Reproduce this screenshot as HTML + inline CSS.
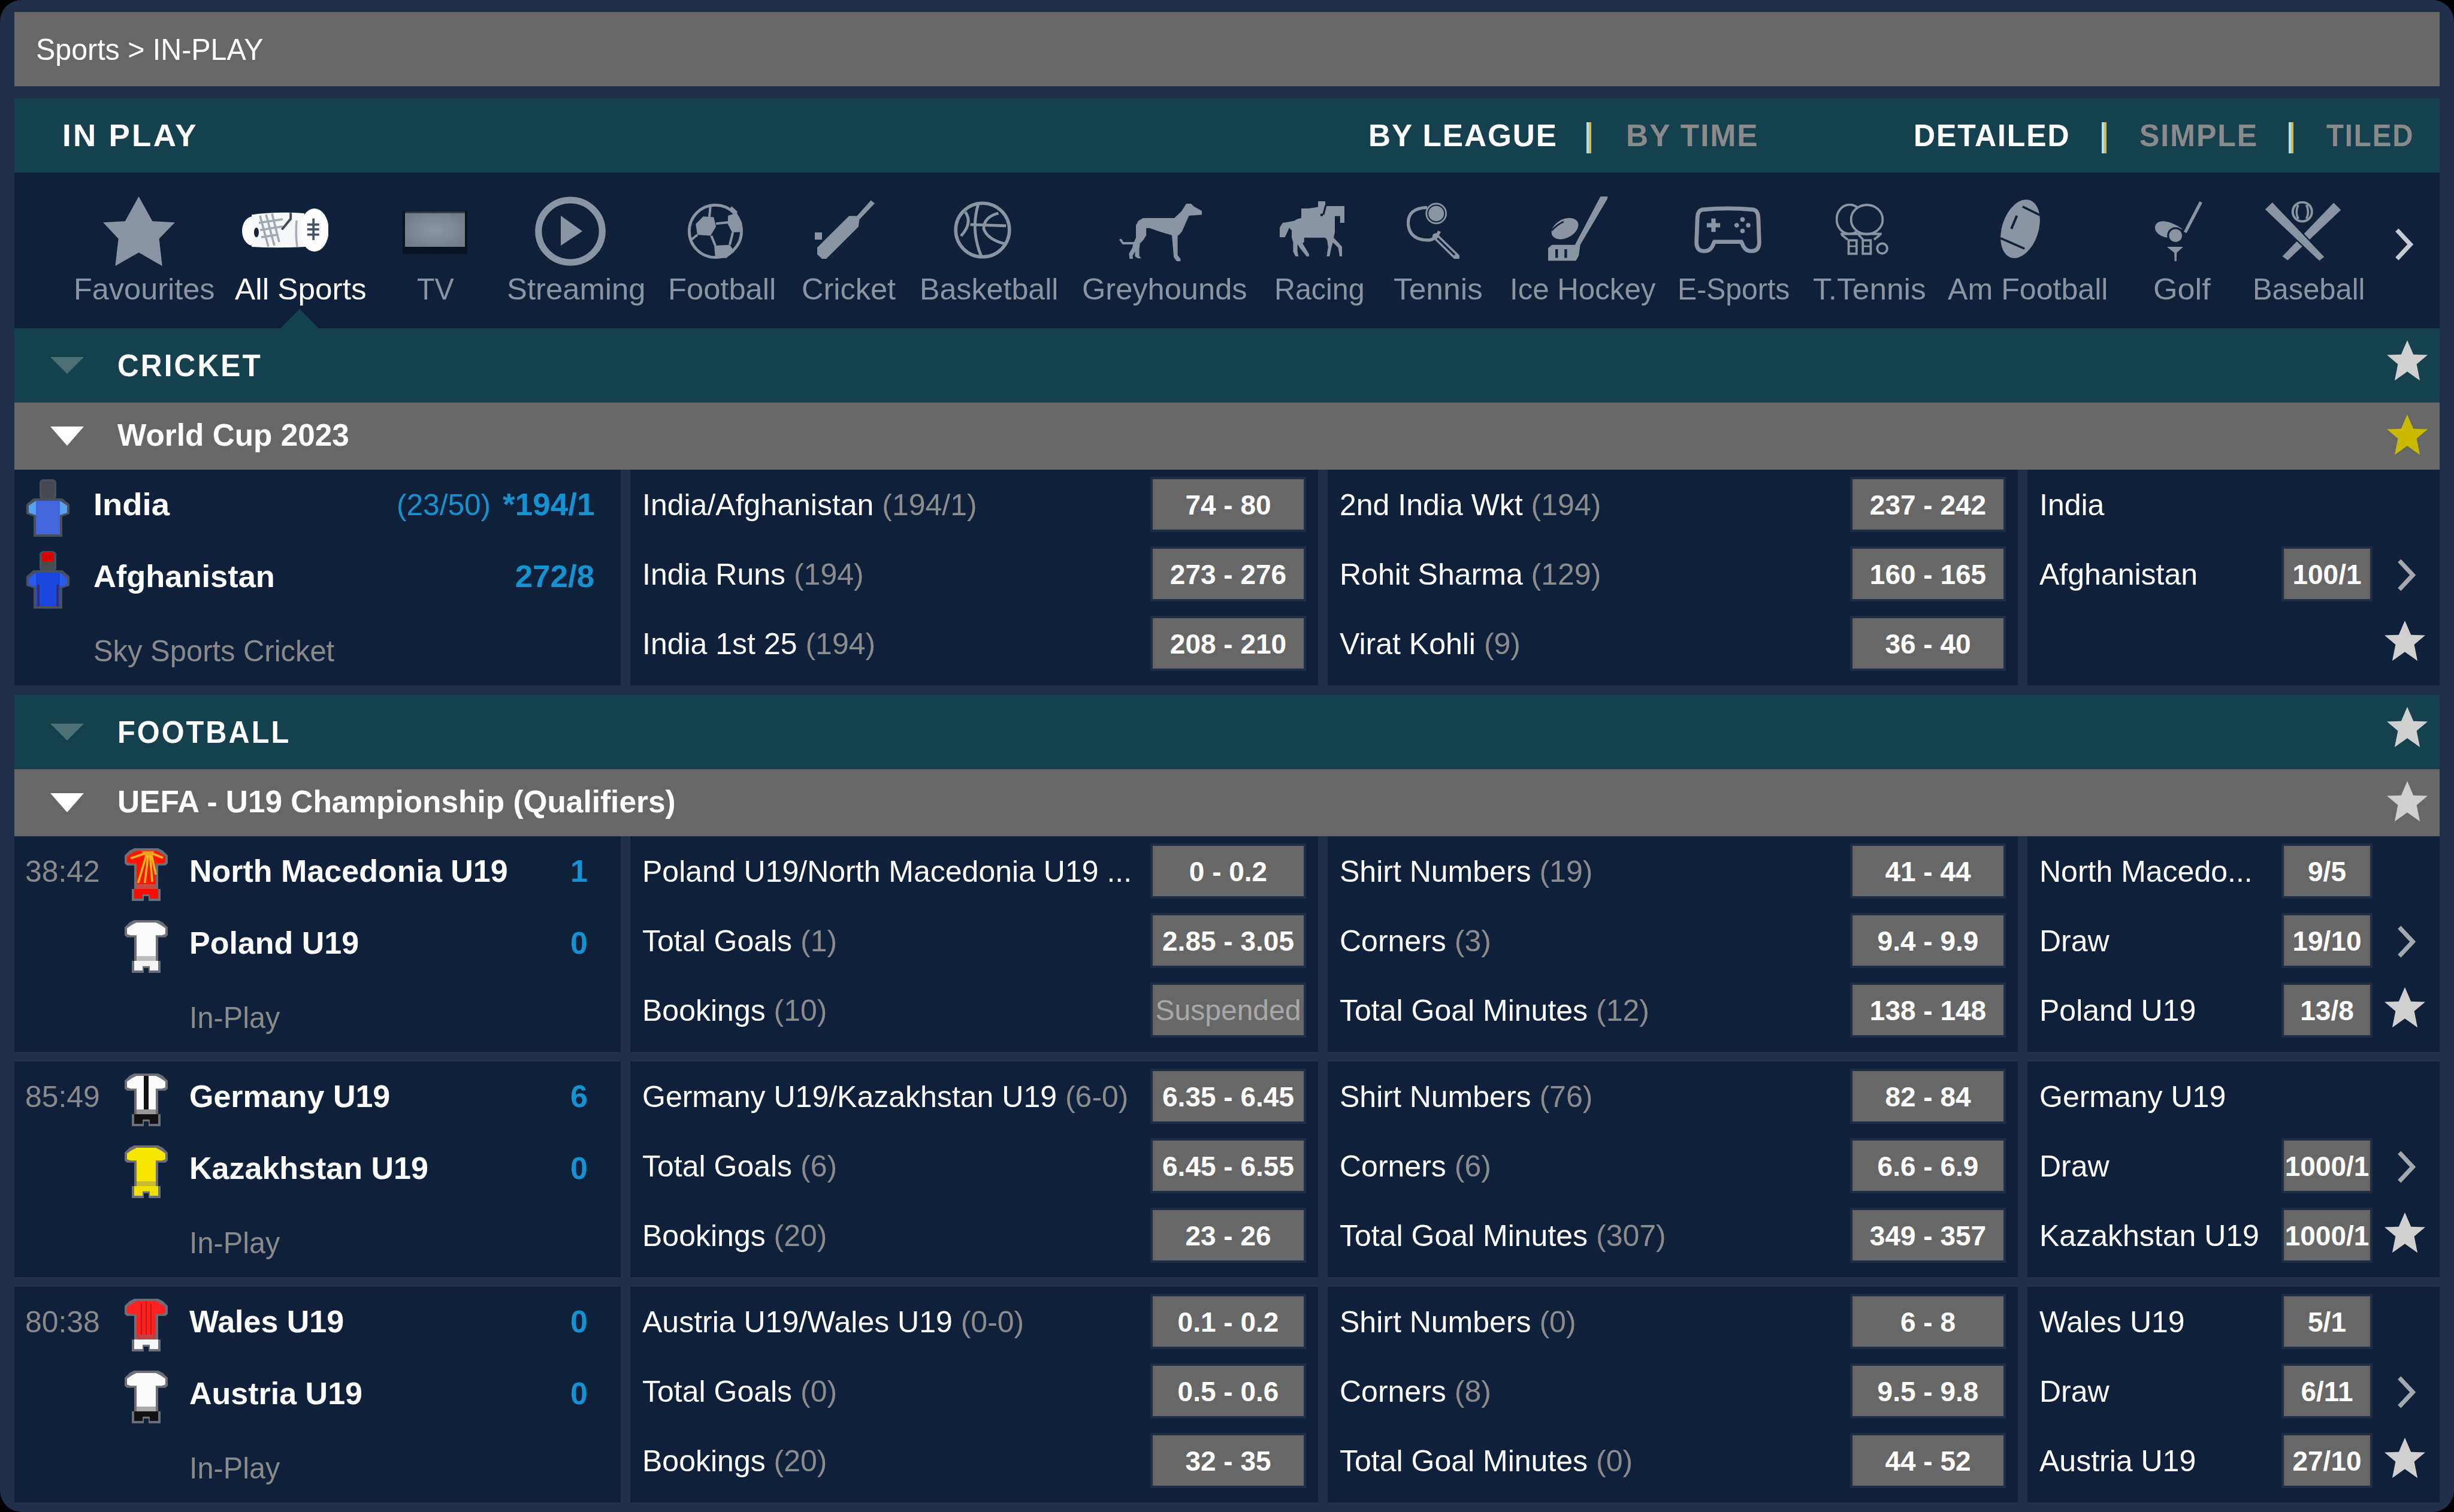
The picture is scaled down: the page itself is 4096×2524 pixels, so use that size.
<!DOCTYPE html>
<html><head><meta charset="utf-8"><style>
html,body{margin:0;padding:0;background:#000;}
body{width:4096px;height:2524px;overflow:hidden;}
#w{position:relative;width:1024px;height:631px;zoom:4;background:#21304a;border-radius:9px;overflow:hidden;font-family:"Liberation Sans", sans-serif;}
.t{position:absolute;white-space:pre;}
.r{position:absolute;display:block;}
</style></head><body><div id="w">
<div class="r" style="left:6px;top:5px;width:1012px;height:31px;background:#676767;"></div>
<div class="t" style="left:15px;top:14.42px;font-size:12.5px;line-height:12.5px;font-weight:400;color:#fff;letter-spacing:0px;transform:scaleX(0.9671);transform-origin:0 0;">Sports &gt; IN-PLAY</div>
<div class="r" style="left:6px;top:41px;width:1012px;height:31px;background:#15404d;"></div>
<div class="t" style="left:26px;top:50.00px;font-size:13px;line-height:13px;font-weight:700;color:#fff;letter-spacing:0.8px;transform:scaleX(1.0189);transform-origin:0 0;">IN PLAY</div>
<div class="t" style="left:571px;top:50.00px;font-size:13px;line-height:13px;font-weight:700;color:#fff;letter-spacing:0.5px;transform:scaleX(0.9860);transform-origin:0 0;">BY LEAGUE</div>
<div class="t" style="left:678.5px;top:50.00px;font-size:13px;line-height:13px;font-weight:700;color:#8a8a8a;letter-spacing:0.5px;transform:scaleX(0.9893);transform-origin:0 0;">BY TIME</div>
<div class="t" style="left:798.5px;top:50.00px;font-size:13px;line-height:13px;font-weight:700;color:#fff;letter-spacing:0.5px;transform:scaleX(0.9606);transform-origin:0 0;">DETAILED</div>
<div class="t" style="left:892.8px;top:50.00px;font-size:13px;line-height:13px;font-weight:700;color:#8a8a8a;letter-spacing:0.5px;transform:scaleX(0.9643);transform-origin:0 0;">SIMPLE</div>
<div class="t" style="left:970.7px;top:50.00px;font-size:13px;line-height:13px;font-weight:700;color:#8a8a8a;letter-spacing:0.5px;transform:scaleX(0.9135);transform-origin:0 0;">TILED</div>
<div class="r" style="left:662px;top:51px;width:1px;height:13px;background:#a8e0f8;"></div>
<div class="r" style="left:663px;top:51px;width:1px;height:13px;background:#d8b850;"></div>
<div class="r" style="left:877px;top:51px;width:1px;height:13px;background:#a8e0f8;"></div>
<div class="r" style="left:878px;top:51px;width:1px;height:13px;background:#d8b850;"></div>
<div class="r" style="left:955px;top:51px;width:1px;height:13px;background:#a8e0f8;"></div>
<div class="r" style="left:956px;top:51px;width:1px;height:13px;background:#d8b850;"></div>
<div class="r" style="left:6px;top:72px;width:1012px;height:65px;background:#0f203a;"></div>
<div class="t" style="left:30.7px;top:114.42px;font-size:12.5px;line-height:12.5px;font-weight:400;color:#8a94a3;letter-spacing:0px;transform:scaleX(1.0090);transform-origin:0 0;">Favourites</div>
<div class="t" style="left:98px;top:114.42px;font-size:12.5px;line-height:12.5px;font-weight:400;color:#fff;letter-spacing:0px;transform:scaleX(1.0263);transform-origin:0 0;">All Sports</div>
<div class="t" style="left:174px;top:114.42px;font-size:12.5px;line-height:12.5px;font-weight:400;color:#8a94a3;letter-spacing:0px;transform:scaleX(0.9668);transform-origin:0 0;">TV</div>
<div class="t" style="left:211.5px;top:114.42px;font-size:12.5px;line-height:12.5px;font-weight:400;color:#8a94a3;letter-spacing:0px;transform:scaleX(1.0161);transform-origin:0 0;">Streaming</div>
<div class="t" style="left:278.8px;top:114.42px;font-size:12.5px;line-height:12.5px;font-weight:400;color:#8a94a3;letter-spacing:0px;transform:scaleX(1.0138);transform-origin:0 0;">Football</div>
<div class="t" style="left:334.4px;top:114.42px;font-size:12.5px;line-height:12.5px;font-weight:400;color:#8a94a3;letter-spacing:0px;transform:scaleX(1.0100);transform-origin:0 0;">Cricket</div>
<div class="t" style="left:383.8px;top:114.42px;font-size:12.5px;line-height:12.5px;font-weight:400;color:#8a94a3;letter-spacing:0px;transform:scaleX(1.0035);transform-origin:0 0;">Basketball</div>
<div class="t" style="left:451.6px;top:114.42px;font-size:12.5px;line-height:12.5px;font-weight:400;color:#8a94a3;letter-spacing:0px;transform:scaleX(1.0116);transform-origin:0 0;">Greyhounds</div>
<div class="t" style="left:531.8px;top:114.42px;font-size:12.5px;line-height:12.5px;font-weight:400;color:#8a94a3;letter-spacing:0px;transform:scaleX(0.9675);transform-origin:0 0;">Racing</div>
<div class="t" style="left:581.4px;top:114.42px;font-size:12.5px;line-height:12.5px;font-weight:400;color:#8a94a3;letter-spacing:0px;transform:scaleX(1.0296);transform-origin:0 0;">Tennis</div>
<div class="t" style="left:630px;top:114.42px;font-size:12.5px;line-height:12.5px;font-weight:400;color:#8a94a3;letter-spacing:0px;transform:scaleX(0.9843);transform-origin:0 0;">Ice Hockey</div>
<div class="t" style="left:700px;top:114.42px;font-size:12.5px;line-height:12.5px;font-weight:400;color:#8a94a3;letter-spacing:0px;transform:scaleX(0.9633);transform-origin:0 0;">E-Sports</div>
<div class="t" style="left:756.4px;top:114.42px;font-size:12.5px;line-height:12.5px;font-weight:400;color:#8a94a3;letter-spacing:0px;transform:scaleX(1.0292);transform-origin:0 0;">T.Tennis</div>
<div class="t" style="left:812.8px;top:114.42px;font-size:12.5px;line-height:12.5px;font-weight:400;color:#8a94a3;letter-spacing:0px;transform:scaleX(1.0027);transform-origin:0 0;">Am Football</div>
<div class="t" style="left:898.4px;top:114.42px;font-size:12.5px;line-height:12.5px;font-weight:400;color:#8a94a3;letter-spacing:0px;transform:scaleX(1.0430);transform-origin:0 0;">Golf</div>
<div class="t" style="left:940px;top:114.42px;font-size:12.5px;line-height:12.5px;font-weight:400;color:#8a94a3;letter-spacing:0px;transform:scaleX(0.9772);transform-origin:0 0;">Baseball</div>
<svg class="r" style="left:43px;top:82px;width:30px;height:29px;" viewBox="0 0 30 29" preserveAspectRatio="none"><path d="M14.9,0 L20.6,10.3 L30,10.8 L23.4,17.6 L24.7,29 L14.9,23.4 L5.1,29 L6.4,17.6 L0,10.8 L9.2,10.3 Z" fill="#8a94a3"/></svg>
<svg class="r" style="left:101px;top:87px;width:36px;height:18px;" viewBox="0 0 36 18" preserveAspectRatio="none"><ellipse cx="4.6" cy="9.4" rx="4.6" ry="6.1" fill="#fbfbfb"/><path d="M4,2.6 Q14,1.2 26,2 L26.5,16 Q14,16.6 4,16 Z" fill="#f6f7f8"/><path d="M7.5,3 L11,16 M10,2.5 L13.5,15.5 M12.5,2.2 L15.5,14 M7,6 L17,4.5 M7.5,9 L17,7.5 M8,12 L14.5,11" stroke="#a0a8b4" stroke-width="0.9" fill="none"/><ellipse cx="6" cy="10" rx="1" ry="2" fill="#1a2538"/><path d="M20.3,1.8 V4.3 L16.6,8.8" stroke="#3e4a5c" stroke-width="1" fill="none"/><path d="M22.8,5 Q22.2,10 23,16" stroke="#a8aeb8" stroke-width="0.9" fill="none"/><ellipse cx="30.2" cy="9" rx="6" ry="9" fill="#fdfdfd"/><path d="M29.8,4.2 V13.2 M27.2,6.7 H32.2 M27.2,8.7 H32.2 M27.2,10.9 H32.2" stroke="#46526a" stroke-width="0.95"/></svg>
<svg class="r" style="left:168px;top:88px;width:27px;height:18px;" viewBox="0 0 27 18" preserveAspectRatio="none"><defs><radialGradient id="tvg" cx="50%" cy="50%" r="60%"><stop offset="0" stop-color="#8d97a4"/><stop offset="1" stop-color="#737c88"/></radialGradient></defs><rect x="0" y="0" width="27" height="18" fill="#0a1322"/><rect x="1" y="0.2" width="25" height="1" fill="#333a44"/><rect x="1" y="1" width="25" height="14" fill="url(#tvg)"/></svg>
<svg class="r" style="left:223px;top:82px;width:30px;height:29px;" viewBox="0 0 30 29" preserveAspectRatio="none"><ellipse cx="15" cy="14.5" rx="13.3" ry="13" fill="none" stroke="#8a94a3" stroke-width="2.8"/><path d="M11,8 L20,14.5 L11,20.5 Z" fill="#8a94a3"/></svg>
<svg class="r" style="left:287px;top:85px;width:23px;height:23px;" viewBox="0 0 23 23" preserveAspectRatio="none"><circle cx="11.5" cy="11.5" r="10.9" fill="none" stroke="#8a94a3" stroke-width="1.2"/><path d="M6.5,5.3 L10.8,5.6 L11.8,9.5 L9.5,13.4 L4,13 L3.3,8.5 Z" fill="#8a94a3"/><path d="M16.8,5 L20.5,3.8 L22.6,8 L22.3,11.8 L18.5,12 L16.7,8.5 Z" fill="#8a94a3"/><path d="M11,17.5 L17.5,17.2 L19.5,20 L16,22.7 L11.5,22.7 Z" fill="#8a94a3"/><path d="M9,5.5 L9.5,0.5 M11.8,8.3 L16.8,7.8 M9.8,13.4 L11.5,17.5 M18.8,12 L17.5,17.2 M4,13 L1.5,15 M20.5,3.8 L18,1.5" stroke="#8a94a3" stroke-width="1" fill="none"/></svg>
<svg class="r" style="left:340px;top:83px;width:25px;height:25px;" viewBox="0 0 25 25" preserveAspectRatio="none"><rect x="0" y="14" width="3" height="3" fill="#8a94a3"/><path d="M23.4,0.6 L25,1.9 L18.6,8.6 L18.2,11.6 L6.1,23.7 L4.8,25 L3,25 L1,23.1 L1,20.3 L13.2,8.2 L14.3,7.1 L17.6,7.1 Z" fill="#8a94a3"/></svg>
<svg class="r" style="left:398px;top:84px;width:24px;height:24px;" viewBox="0 0 24 24" preserveAspectRatio="none"><circle cx="12" cy="12" r="11.2" fill="none" stroke="#8a94a3" stroke-width="1.4"/><path d="M10.2,1.2 Q7.8,9.5 9.6,17 Q10.3,20.5 11.6,23 M4.8,4.5 Q8,9 3,14.5 M18.6,5 Q12.5,6.5 12.5,11.5 Q14,16 21.5,17.8 M6.9,9.7 L21.8,10.2" fill="none" stroke="#8a94a3" stroke-width="1.2"/></svg>
<svg class="r" style="left:467px;top:85px;width:35px;height:24px;" viewBox="0 0 35 24" preserveAspectRatio="none"><path d="M28,0 H30 L31,1 L32,1.6 L34.5,3 V4.6 L29.2,5 L28.4,6.6 L27.2,9.4 L26.2,11.6 L25,13 L24.4,13.4 V21.5 L25.6,23 V24 H24 L22.8,22.4 L22,13.2 L17,11.7 L12.7,10.2 H11.3 V13.2 L10.2,15 L8.7,16.6 L8.4,19 V21.8 L9.2,22.8 H7.8 L6.6,22 V20 L5.6,21.8 L5.8,23 H4.3 L4.1,20.8 L5.5,18.4 L5.8,17 H1.4 L0,15 L0.9,14.6 L1.8,16 H6.2 L7,14.2 V9 L8,7.2 L10,6 H23 L26,3.2 Z" fill="#8a94a3"/></svg>
<svg class="r" style="left:533px;top:84px;width:28px;height:24px;" viewBox="0 0 28 24" preserveAspectRatio="none"><path d="M17,0 H20 V2 L21,2 H28 V9 H26.2 V6.2 H24 V13 L23.5,15.2 L25.8,17.6 L27,19 V23 H26 L25.4,19.4 L23.2,17.2 L22.6,19.2 L21.8,23 H20.6 L21.2,19 L20.8,16.2 L20,15.2 H11.2 V16.8 L10.6,17.6 L13.2,22 V23 H12.2 L9.5,19.6 L8.4,17.8 V21 L8.8,23 H7.6 L6.6,21 V17.2 L6,15 V12.2 L5,11 L3.2,15 H1 V11 L2.2,9 L7,8.2 L8.4,7.4 L10,7 V3 H13 L17,2.4 Z" fill="#8a94a3"/><path d="M20.2,1.8 L19.2,5.6" stroke="#0f203a" stroke-width="0.8"/><rect x="18" y="5.2" width="1" height="1" fill="#0f203a"/></svg>
<svg class="r" style="left:587px;top:84px;width:22px;height:24px;" viewBox="0 0 22 24" preserveAspectRatio="none"><path d="M8.5,2.6 Q0.3,2.8 0.6,9.6 Q1.3,16.3 9.3,16.2 Q12.3,15.8 13.6,12.5" fill="none" stroke="#8a94a3" stroke-width="1.3"/><circle cx="12.3" cy="5.1" r="3.6" fill="#8a94a3" stroke="#0f203a" stroke-width="0.7"/><circle cx="12.3" cy="5.1" r="4.1" fill="none" stroke="#8a94a3" stroke-width="0.7"/><path d="M12,14.6 L20.8,23.2" stroke="#8a94a3" stroke-width="2.6" stroke-linecap="round"/><path d="M12.8,15.4 L20,22.4" stroke="#0f203a" stroke-width="0.8"/></svg>
<svg class="r" style="left:646px;top:82px;width:25px;height:27px;" viewBox="0 0 25 27" preserveAspectRatio="none"><path d="M21.9,0 L24.9,0 L24.6,1.2 L13.4,20.2 L12.8,24.6 L11.6,26.8 L0,26.8 L0,21.5 L1.6,20.2 L11.2,20.2 L21.3,1 Z" fill="#8a94a3"/><rect x="3" y="22" width="1.1" height="3.6" fill="#0f203a"/><rect x="6.8" y="22" width="1.1" height="3.6" fill="#0f203a"/><ellipse cx="7" cy="13.4" rx="6" ry="3.9" transform="rotate(-28 7 13.4)" fill="#8a94a3"/><path d="M1.5,14.2 Q4,11.5 6.5,10.5" stroke="#0f203a" stroke-width="0.7" fill="none"/></svg>
<svg class="r" style="left:707px;top:86px;width:28px;height:20px;" viewBox="0 0 28 20" preserveAspectRatio="none"><path d="M3.2,1.5 Q14,0.4 24.8,1.5 Q26.6,2 26.7,4.8 L27.1,15 Q27.1,18.8 23.8,18.8 Q21.5,18.8 20.5,16.8 L19.6,14.9 L8.4,14.9 L7.5,16.8 Q6.5,18.8 4.2,18.8 Q0.9,18.8 0.9,15 L1.3,4.8 Q1.4,2 3.2,1.5 Z" fill="none" stroke="#8a94a3" stroke-width="1.7"/><path d="M8,5.2 V10.8 M5.2,8 H10.8" stroke="#8a94a3" stroke-width="1.8"/><circle cx="20.1" cy="5.6" r="0.95" fill="#8a94a3"/><circle cx="20.1" cy="10.4" r="0.95" fill="#8a94a3"/><circle cx="17.7" cy="8" r="0.95" fill="#8a94a3"/><circle cx="22.5" cy="8" r="0.95" fill="#8a94a3"/></svg>
<svg class="r" style="left:766px;top:85px;width:22px;height:22px;" viewBox="0 0 22 22" preserveAspectRatio="none"><ellipse cx="5.8" cy="6.5" rx="5.4" ry="6.1" fill="none" stroke="#8a94a3" stroke-width="0.95"/><ellipse cx="13" cy="6.6" rx="6.6" ry="6.1" fill="#0f203a" stroke="#8a94a3" stroke-width="0.95"/><path d="M2,12.6 H19.2" stroke="#8a94a3" stroke-width="1"/><path d="M2.5,13 L5,15 M9.5,13 L11.5,15 M18.5,13 L16,15" stroke="#8a94a3" stroke-width="0.9"/><rect x="5.4" y="15.3" width="3.3" height="5.6" fill="none" stroke="#8a94a3" stroke-width="0.95"/><rect x="11.3" y="15.3" width="3.3" height="5.6" fill="none" stroke="#8a94a3" stroke-width="0.95"/><path d="M5.4,17.8 H8.7 M11.3,17.8 H14.6" stroke="#8a94a3" stroke-width="0.7"/><circle cx="19.4" cy="18.7" r="2.1" fill="none" stroke="#8a94a3" stroke-width="0.95"/></svg>
<svg class="r" style="left:834px;top:83px;width:18px;height:25px;" viewBox="0 0 18 25" preserveAspectRatio="none"><ellipse cx="9" cy="12.5" rx="7.6" ry="12.6" transform="rotate(18 9 12.5)" fill="#8a94a3"/><path d="M10,3.2 L17.2,6.8 M0.8,16.4 L10.8,20.8" stroke="#0f203a" stroke-width="0.9"/><path d="M7.6,7 L5.3,12.5" stroke="#0f203a" stroke-width="1"/></svg>
<svg class="r" style="left:899px;top:84px;width:20px;height:25px;" viewBox="0 0 20 25" preserveAspectRatio="none"><path d="M19.4,0.3 L12.8,13" stroke="#8a94a3" stroke-width="1.3"/><path d="M0.2,10.5 Q0.8,8.2 4,8.3 Q8,8.8 11.5,11.5 L9.5,14.5 Q6,16 3,14.5 Q0,13 0.2,10.5 Z" fill="#8a94a3"/><circle cx="8.8" cy="14.3" r="3.1" fill="#8a94a3" stroke="#0f203a" stroke-width="0.8"/><path d="M5.2,19 H12 L9.3,21.5 L9.2,25 L8.4,25 L8.3,21.5 Z" fill="#8a94a3"/></svg>
<svg class="r" style="left:945px;top:84px;width:32px;height:25px;" viewBox="0 0 32 25" preserveAspectRatio="none"><path d="M28.8,0.6 L31.8,3.6 L9.6,24.6 L7.4,23 Z" fill="#8a94a3"/><path d="M0.2,3.4 L3.2,0.5 L24.8,23.2 L22.8,24.8 Z" fill="#8a94a3" stroke="#0f203a" stroke-width="1.2" paint-order="stroke"/><circle cx="15.7" cy="4.4" r="4" fill="none" stroke="#8a94a3" stroke-width="1"/><path d="M14,1.5 Q12.6,4.4 14,7.3 M17.4,1.5 Q18.8,4.4 17.4,7.3" stroke="#8a94a3" stroke-width="0.9" fill="none"/></svg>
<svg class="r" style="left:999px;top:95px;width:8px;height:14px;" viewBox="0 0 8 14" preserveAspectRatio="none"><path d="M1.2 1 L6.8 7 L1.2 13" fill="none" stroke="#c8ccd0" stroke-width="1.8"/></svg>
<svg class="r" style="left:117px;top:129px;width:16px;height:8px;" viewBox="0 0 16 8" preserveAspectRatio="none"><path d="M0 8 L8 0 L16 8 Z" fill="#15404d"/></svg>
<div class="r" style="left:6px;top:137px;width:1012px;height:31px;background:#15404d;"></div>
<svg class="r" style="left:21px;top:149px;width:14px;height:7px;" viewBox="0 0 14 8" preserveAspectRatio="none"><path d="M0 0 L14 0 L7 8 Z" fill="#4d7077"/></svg>
<div class="t" style="left:49px;top:146.00px;font-size:13px;line-height:13px;font-weight:700;color:#fff;letter-spacing:0.8px;transform:scaleX(0.9535);transform-origin:0 0;">CRICKET</div>
<svg class="r" style="left:996px;top:142px;width:17px;height:17px;" viewBox="0 0 100 100" preserveAspectRatio="none"><path d="M50 0 L65 35 L100 36 L73 59 L81 99 L50 77 L19 99 L27 59 L0 36 L35 35 Z" fill="#d0d0d0"/></svg>
<div class="r" style="left:6px;top:168px;width:1012px;height:28px;background:#676767;"></div>
<svg class="r" style="left:21px;top:178px;width:14px;height:8px;" viewBox="0 0 14 8" preserveAspectRatio="none"><path d="M0 0 L14 0 L7 8 Z" fill="#fff"/></svg>
<div class="t" style="left:49px;top:175.00px;font-size:13px;line-height:13px;font-weight:700;color:#fff;letter-spacing:0px;transform:scaleX(0.9867);transform-origin:0 0;">World Cup 2023</div>
<svg class="r" style="left:996px;top:173px;width:17px;height:17px;" viewBox="0 0 100 100" preserveAspectRatio="none"><path d="M50 0 L65 35 L100 36 L73 59 L81 99 L50 77 L19 99 L27 59 L0 36 L35 35 Z" fill="#c9b900"/></svg>
<div class="r" style="left:6px;top:196px;width:253px;height:90px;background:#0f203a;"></div>
<div class="r" style="left:263px;top:196px;width:287px;height:90px;background:#0f203a;"></div>
<div class="r" style="left:554px;top:196px;width:288px;height:90px;background:#0f203a;"></div>
<div class="r" style="left:846px;top:196px;width:172px;height:90px;background:#0f203a;"></div>
<svg class="r" style="left:11px;top:200px;width:18px;height:24px;" viewBox="0 0 18 24" preserveAspectRatio="none"><rect x="5.5" y="0" width="7" height="8.5" rx="1.5" fill="#4a4f5c"/><path d="M3,8 H15 L18,10.5 V14.5 L15,15.5 V24 H3 V15.5 L0,14.5 V10.5 Z" fill="#4a4f5c"/><rect x="6.5" y="1" width="5" height="7" rx="1" fill="#46474f"/><path d="M4,9 H14 V23 H4 Z" fill="#4466dd"/><path d="M1,11 L4,9 V15 L1,14 Z M17,11 L14,9 V15 L17,14 Z" fill="#58a0f2"/></svg>
<svg class="r" style="left:11px;top:230px;width:18px;height:24px;" viewBox="0 0 18 24" preserveAspectRatio="none"><rect x="5.5" y="0" width="7" height="8.5" rx="1.5" fill="#4a4f5c"/><path d="M3,8 H15 L18,10.5 V14.5 L15,15.5 V24 H3 V15.5 L0,14.5 V10.5 Z" fill="#4a4f5c"/><rect x="6.5" y="0.5" width="5" height="3.8" rx="1" fill="#e00000"/><rect x="6.5" y="4.3" width="5" height="3.7" fill="#4a4b52"/><path d="M4,9 H14 V23 H4 Z" fill="#1a46dd"/><path d="M1,11 L4,9 V15 L1,14 Z M17,11 L14,9 V15 L17,14 Z" fill="#2a5ae8"/><path d="M5,14 V23 M13,14 V23" stroke="#3a2a66" stroke-width="0.9"/></svg>
<div class="t" style="left:39px;top:204.00px;font-size:13px;line-height:13px;font-weight:700;color:#fff;letter-spacing:0px;transform:scaleX(1.0467);transform-origin:0 0;">India</div>
<div class="t" style="left:165.6px;top:204.42px;font-size:12.5px;line-height:12.5px;font-weight:400;color:#1592d2;letter-spacing:0px;transform:scaleX(0.9914);transform-origin:0 0;">(23/50)</div>
<div class="t" style="right:776px;top:204.00px;font-size:13px;line-height:13px;font-weight:700;color:#1592d2;letter-spacing:0px;transform:scaleX(1.0195);transform-origin:100% 0;">*194/1</div>
<div class="t" style="left:39px;top:234.00px;font-size:13px;line-height:13px;font-weight:700;color:#fff;letter-spacing:0px;transform:scaleX(1.0080);transform-origin:0 0;">Afghanistan</div>
<div class="t" style="right:776px;top:234.00px;font-size:13px;line-height:13px;font-weight:700;color:#1592d2;letter-spacing:0px;transform:scaleX(1.0182);transform-origin:100% 0;">272/8</div>
<div class="t" style="left:39px;top:265.42px;font-size:12.5px;line-height:12.5px;font-weight:400;color:#8a8a8a;letter-spacing:0px;transform:scaleX(0.9781);transform-origin:0 0;">Sky Sports Cricket</div>
<div class="t" style="left:268px;top:204.42px;font-size:12.5px;line-height:12.5px;font-weight:400;color:#fff;letter-spacing:0px;">India/Afghanistan<span style="color:#8c8c8c"> (194/1)</span></div>
<div class="r" style="left:480px;top:199px;width:65px;height:23px;background:#676767;border:1px solid #1f2e45;box-sizing:border-box;"></div>
<div class="t" style="left:362.5px;width:300px;text-align:center;top:204.97px;font-size:11.5px;line-height:11.5px;font-weight:700;color:#fff;letter-spacing:0px;">74 - 80</div>
<div class="t" style="left:268px;top:233.42px;font-size:12.5px;line-height:12.5px;font-weight:400;color:#fff;letter-spacing:0px;">India Runs<span style="color:#8c8c8c"> (194)</span></div>
<div class="r" style="left:480px;top:228px;width:65px;height:23px;background:#676767;border:1px solid #1f2e45;box-sizing:border-box;"></div>
<div class="t" style="left:362.5px;width:300px;text-align:center;top:233.97px;font-size:11.5px;line-height:11.5px;font-weight:700;color:#fff;letter-spacing:0px;">273 - 276</div>
<div class="t" style="left:268px;top:262.42px;font-size:12.5px;line-height:12.5px;font-weight:400;color:#fff;letter-spacing:0px;">India 1st 25<span style="color:#8c8c8c"> (194)</span></div>
<div class="r" style="left:480px;top:257px;width:65px;height:23px;background:#676767;border:1px solid #1f2e45;box-sizing:border-box;"></div>
<div class="t" style="left:362.5px;width:300px;text-align:center;top:262.97px;font-size:11.5px;line-height:11.5px;font-weight:700;color:#fff;letter-spacing:0px;">208 - 210</div>
<div class="t" style="left:559px;top:204.42px;font-size:12.5px;line-height:12.5px;font-weight:400;color:#fff;letter-spacing:0px;">2nd India Wkt<span style="color:#8c8c8c"> (194)</span></div>
<div class="r" style="left:772px;top:199px;width:65px;height:23px;background:#676767;border:1px solid #1f2e45;box-sizing:border-box;"></div>
<div class="t" style="left:654.5px;width:300px;text-align:center;top:204.97px;font-size:11.5px;line-height:11.5px;font-weight:700;color:#fff;letter-spacing:0px;">237 - 242</div>
<div class="t" style="left:559px;top:233.42px;font-size:12.5px;line-height:12.5px;font-weight:400;color:#fff;letter-spacing:0px;">Rohit Sharma<span style="color:#8c8c8c"> (129)</span></div>
<div class="r" style="left:772px;top:228px;width:65px;height:23px;background:#676767;border:1px solid #1f2e45;box-sizing:border-box;"></div>
<div class="t" style="left:654.5px;width:300px;text-align:center;top:233.97px;font-size:11.5px;line-height:11.5px;font-weight:700;color:#fff;letter-spacing:0px;">160 - 165</div>
<div class="t" style="left:559px;top:262.42px;font-size:12.5px;line-height:12.5px;font-weight:400;color:#fff;letter-spacing:0px;">Virat Kohli<span style="color:#8c8c8c"> (9)</span></div>
<div class="r" style="left:772px;top:257px;width:65px;height:23px;background:#676767;border:1px solid #1f2e45;box-sizing:border-box;"></div>
<div class="t" style="left:654.5px;width:300px;text-align:center;top:262.97px;font-size:11.5px;line-height:11.5px;font-weight:700;color:#fff;letter-spacing:0px;">36 - 40</div>
<div class="t" style="left:851px;top:204.42px;font-size:12.5px;line-height:12.5px;font-weight:400;color:#fff;letter-spacing:0px;">India</div>
<div class="t" style="left:851px;top:233.42px;font-size:12.5px;line-height:12.5px;font-weight:400;color:#fff;letter-spacing:0px;">Afghanistan</div>
<div class="r" style="left:952px;top:228px;width:38px;height:23px;background:#676767;border:1px solid #1f2e45;box-sizing:border-box;"></div>
<div class="t" style="left:821.0px;width:300px;text-align:center;top:233.97px;font-size:11.5px;line-height:11.5px;font-weight:700;color:#fff;letter-spacing:0px;">100/1</div>
<div class="t" style="left:851px;top:262.42px;font-size:12.5px;line-height:12.5px;font-weight:400;color:#fff;letter-spacing:0px;"></div>
<svg class="r" style="left:1000px;top:233px;width:8px;height:14px;" viewBox="0 0 8 14" preserveAspectRatio="none"><path d="M1.2 1 L6.8 7 L1.2 13" fill="none" stroke="#a4a8ac" stroke-width="1.8"/></svg>
<svg class="r" style="left:995px;top:259px;width:17px;height:17px;" viewBox="0 0 100 100" preserveAspectRatio="none"><path d="M50 0 L65 35 L100 36 L73 59 L81 99 L50 77 L19 99 L27 59 L0 36 L35 35 Z" fill="#d0d0d0"/></svg>
<div class="r" style="left:6px;top:286px;width:1012px;height:4px;background:#21304a;"></div>
<div class="r" style="left:6px;top:290px;width:1012px;height:31px;background:#15404d;"></div>
<svg class="r" style="left:21px;top:302px;width:14px;height:7px;" viewBox="0 0 14 8" preserveAspectRatio="none"><path d="M0 0 L14 0 L7 8 Z" fill="#4d7077"/></svg>
<div class="t" style="left:49px;top:299.00px;font-size:13px;line-height:13px;font-weight:700;color:#fff;letter-spacing:0.8px;transform:scaleX(0.9370);transform-origin:0 0;">FOOTBALL</div>
<svg class="r" style="left:996px;top:295px;width:17px;height:17px;" viewBox="0 0 100 100" preserveAspectRatio="none"><path d="M50 0 L65 35 L100 36 L73 59 L81 99 L50 77 L19 99 L27 59 L0 36 L35 35 Z" fill="#d0d0d0"/></svg>
<div class="r" style="left:6px;top:321px;width:1012px;height:28px;background:#676767;"></div>
<svg class="r" style="left:21px;top:331px;width:14px;height:8px;" viewBox="0 0 14 8" preserveAspectRatio="none"><path d="M0 0 L14 0 L7 8 Z" fill="#fff"/></svg>
<div class="t" style="left:49px;top:328.00px;font-size:13px;line-height:13px;font-weight:700;color:#fff;letter-spacing:0px;transform:scaleX(0.9881);transform-origin:0 0;">UEFA - U19 Championship (Qualifiers)</div>
<svg class="r" style="left:996px;top:326px;width:17px;height:17px;" viewBox="0 0 100 100" preserveAspectRatio="none"><path d="M50 0 L65 35 L100 36 L73 59 L81 99 L50 77 L19 99 L27 59 L0 36 L35 35 Z" fill="#d0d0d0"/></svg>
<div class="r" style="left:6px;top:349px;width:253px;height:90px;background:#0f203a;"></div>
<div class="r" style="left:263px;top:349px;width:287px;height:90px;background:#0f203a;"></div>
<div class="r" style="left:554px;top:349px;width:288px;height:90px;background:#0f203a;"></div>
<div class="r" style="left:846px;top:349px;width:172px;height:90px;background:#0f203a;"></div>
<svg class="r" style="left:52px;top:354px;width:18px;height:22px;" viewBox="0 0 18 22" preserveAspectRatio="none"><path d="M4,0 H14 L16,1 L17,2 L18,3 V6.3 L17,7.2 H14 V17 H15 V22 H10 V20 H8 V22 H3 V17 H4 V7.2 H1 L0,6.3 V3 L1,2 L2,1 Z" fill="#6c6f77"/><path d="M5,1 H13 L15,2 L17,3.4 V5.8 L15.5,6.3 H13 V15 H5 V6.3 H2.5 L1,5.8 V3.4 L3,2 Z" fill="#ff1500"/><path d="M9.5,1.5 L5.6,14.5 M10,1.5 L8.4,14.5 M10.5,1.5 L11.5,14 M11,1.5 L13,11 M9,2 L2.5,4.2 M11,2 L16,4" stroke="#f0b41e" stroke-width="0.9" fill="none"/><path d="M7,1.2 H12.5 L11,3 H8.5 Z" fill="#f2a020"/><rect x="5" y="15" width="8" height="2" fill="#c84a40"/><path d="M4,17 H14 V21 H10.5 V19.2 H7.5 V21 H4 Z" fill="#ff0a00"/></svg>
<svg class="r" style="left:52px;top:384px;width:18px;height:22px;" viewBox="0 0 18 22" preserveAspectRatio="none"><path d="M4,0 H14 L16,1 L17,2 L18,3 V6.3 L17,7.2 H14 V17 H15 V22 H10 V20 H8 V22 H3 V17 H4 V7.2 H1 L0,6.3 V3 L1,2 L2,1 Z" fill="#6c6f77"/><path d="M5,1 H13 L15,2 L17,3.4 V5.8 L15.5,6.3 H13 V15 H5 V6.3 H2.5 L1,5.8 V3.4 L3,2 Z" fill="#fbfbfb"/><rect x="5" y="15" width="8" height="2" fill="#bdbdbd"/><path d="M4,17 H14 V21 H10.5 V19.2 H7.5 V21 H4 Z" fill="#f4f4f4"/></svg>
<div class="t" style="left:10.6px;top:357.42px;font-size:12.5px;line-height:12.5px;font-weight:400;color:#8a8a8a;letter-spacing:0px;transform:scaleX(0.9965);transform-origin:0 0;">38:42</div>
<div class="t" style="left:79px;top:357.00px;font-size:13px;line-height:13px;font-weight:700;color:#fff;letter-spacing:0px;">North Macedonia U19</div>
<div class="t" style="left:238px;top:357.00px;font-size:13px;line-height:13px;font-weight:700;color:#1592d2;letter-spacing:0px;">1</div>
<div class="t" style="left:79px;top:387.00px;font-size:13px;line-height:13px;font-weight:700;color:#fff;letter-spacing:0px;">Poland U19</div>
<div class="t" style="left:238px;top:387.00px;font-size:13px;line-height:13px;font-weight:700;color:#1592d2;letter-spacing:0px;">0</div>
<div class="t" style="left:79px;top:418.42px;font-size:12.5px;line-height:12.5px;font-weight:400;color:#8a8a8a;letter-spacing:0px;transform:scaleX(0.9729);transform-origin:0 0;">In-Play</div>
<div class="t" style="left:268px;top:357.42px;font-size:12.5px;line-height:12.5px;font-weight:400;color:#fff;letter-spacing:0px;">Poland U19/North Macedonia U19 ...<span style="color:#8c8c8c"></span></div>
<div class="r" style="left:480px;top:352px;width:65px;height:23px;background:#676767;border:1px solid #1f2e45;box-sizing:border-box;"></div>
<div class="t" style="left:362.5px;width:300px;text-align:center;top:357.97px;font-size:11.5px;line-height:11.5px;font-weight:700;color:#fff;letter-spacing:0px;">0 - 0.2</div>
<div class="t" style="left:268px;top:386.42px;font-size:12.5px;line-height:12.5px;font-weight:400;color:#fff;letter-spacing:0px;">Total Goals<span style="color:#8c8c8c"> (1)</span></div>
<div class="r" style="left:480px;top:381px;width:65px;height:23px;background:#676767;border:1px solid #1f2e45;box-sizing:border-box;"></div>
<div class="t" style="left:362.5px;width:300px;text-align:center;top:386.97px;font-size:11.5px;line-height:11.5px;font-weight:700;color:#fff;letter-spacing:0px;">2.85 - 3.05</div>
<div class="t" style="left:268px;top:415.42px;font-size:12.5px;line-height:12.5px;font-weight:400;color:#fff;letter-spacing:0px;">Bookings<span style="color:#8c8c8c"> (10)</span></div>
<div class="r" style="left:480px;top:410px;width:65px;height:23px;background:#676767;border:1px solid #1f2e45;box-sizing:border-box;"></div>
<div class="t" style="left:362.5px;width:300px;text-align:center;top:415.84px;font-size:12px;line-height:12px;font-weight:400;color:#a8a8a8;letter-spacing:0px;">Suspended</div>
<div class="t" style="left:559px;top:357.42px;font-size:12.5px;line-height:12.5px;font-weight:400;color:#fff;letter-spacing:0px;">Shirt Numbers<span style="color:#8c8c8c"> (19)</span></div>
<div class="r" style="left:772px;top:352px;width:65px;height:23px;background:#676767;border:1px solid #1f2e45;box-sizing:border-box;"></div>
<div class="t" style="left:654.5px;width:300px;text-align:center;top:357.97px;font-size:11.5px;line-height:11.5px;font-weight:700;color:#fff;letter-spacing:0px;">41 - 44</div>
<div class="t" style="left:559px;top:386.42px;font-size:12.5px;line-height:12.5px;font-weight:400;color:#fff;letter-spacing:0px;">Corners<span style="color:#8c8c8c"> (3)</span></div>
<div class="r" style="left:772px;top:381px;width:65px;height:23px;background:#676767;border:1px solid #1f2e45;box-sizing:border-box;"></div>
<div class="t" style="left:654.5px;width:300px;text-align:center;top:386.97px;font-size:11.5px;line-height:11.5px;font-weight:700;color:#fff;letter-spacing:0px;">9.4 - 9.9</div>
<div class="t" style="left:559px;top:415.42px;font-size:12.5px;line-height:12.5px;font-weight:400;color:#fff;letter-spacing:0px;">Total Goal Minutes<span style="color:#8c8c8c"> (12)</span></div>
<div class="r" style="left:772px;top:410px;width:65px;height:23px;background:#676767;border:1px solid #1f2e45;box-sizing:border-box;"></div>
<div class="t" style="left:654.5px;width:300px;text-align:center;top:415.97px;font-size:11.5px;line-height:11.5px;font-weight:700;color:#fff;letter-spacing:0px;">138 - 148</div>
<div class="t" style="left:851px;top:357.42px;font-size:12.5px;line-height:12.5px;font-weight:400;color:#fff;letter-spacing:0px;">North Macedo...</div>
<div class="r" style="left:952px;top:352px;width:38px;height:23px;background:#676767;border:1px solid #1f2e45;box-sizing:border-box;"></div>
<div class="t" style="left:821.0px;width:300px;text-align:center;top:357.97px;font-size:11.5px;line-height:11.5px;font-weight:700;color:#fff;letter-spacing:0px;">9/5</div>
<div class="t" style="left:851px;top:386.42px;font-size:12.5px;line-height:12.5px;font-weight:400;color:#fff;letter-spacing:0px;">Draw</div>
<div class="r" style="left:952px;top:381px;width:38px;height:23px;background:#676767;border:1px solid #1f2e45;box-sizing:border-box;"></div>
<div class="t" style="left:821.0px;width:300px;text-align:center;top:386.97px;font-size:11.5px;line-height:11.5px;font-weight:700;color:#fff;letter-spacing:0px;">19/10</div>
<div class="t" style="left:851px;top:415.42px;font-size:12.5px;line-height:12.5px;font-weight:400;color:#fff;letter-spacing:0px;">Poland U19</div>
<div class="r" style="left:952px;top:410px;width:38px;height:23px;background:#676767;border:1px solid #1f2e45;box-sizing:border-box;"></div>
<div class="t" style="left:821.0px;width:300px;text-align:center;top:415.97px;font-size:11.5px;line-height:11.5px;font-weight:700;color:#fff;letter-spacing:0px;">13/8</div>
<svg class="r" style="left:1000px;top:386px;width:8px;height:14px;" viewBox="0 0 8 14" preserveAspectRatio="none"><path d="M1.2 1 L6.8 7 L1.2 13" fill="none" stroke="#a4a8ac" stroke-width="1.8"/></svg>
<svg class="r" style="left:995px;top:412px;width:17px;height:17px;" viewBox="0 0 100 100" preserveAspectRatio="none"><path d="M50 0 L65 35 L100 36 L73 59 L81 99 L50 77 L19 99 L27 59 L0 36 L35 35 Z" fill="#d0d0d0"/></svg>
<div class="r" style="left:6px;top:443px;width:253px;height:90px;background:#0f203a;"></div>
<div class="r" style="left:263px;top:443px;width:287px;height:90px;background:#0f203a;"></div>
<div class="r" style="left:554px;top:443px;width:288px;height:90px;background:#0f203a;"></div>
<div class="r" style="left:846px;top:443px;width:172px;height:90px;background:#0f203a;"></div>
<svg class="r" style="left:52px;top:448px;width:18px;height:22px;" viewBox="0 0 18 22" preserveAspectRatio="none"><path d="M4,0 H14 L16,1 L17,2 L18,3 V6.3 L17,7.2 H14 V17 H15 V22 H10 V20 H8 V22 H3 V17 H4 V7.2 H1 L0,6.3 V3 L1,2 L2,1 Z" fill="#6c6f77"/><path d="M5,1 H13 L15,2 L17,3.4 V5.8 L15.5,6.3 H13 V15 H5 V6.3 H2.5 L1,5.8 V3.4 L3,2 Z" fill="#fbfbfb"/><rect x="8" y="1" width="2" height="14" fill="#111"/><rect x="5" y="15" width="8" height="2" fill="#999"/><path d="M4,17 H14 V21 H10.5 V19.2 H7.5 V21 H4 Z" fill="#111"/></svg>
<svg class="r" style="left:52px;top:478px;width:18px;height:22px;" viewBox="0 0 18 22" preserveAspectRatio="none"><path d="M4,0 H14 L16,1 L17,2 L18,3 V6.3 L17,7.2 H14 V17 H15 V22 H10 V20 H8 V22 H3 V17 H4 V7.2 H1 L0,6.3 V3 L1,2 L2,1 Z" fill="#6c6f77"/><path d="M5,1 H13 L15,2 L17,3.4 V5.8 L15.5,6.3 H13 V15 H5 V6.3 H2.5 L1,5.8 V3.4 L3,2 Z" fill="#f7e600"/><rect x="5" y="15" width="8" height="2" fill="#c8bb30"/><path d="M4,17 H14 V21 H10.5 V19.2 H7.5 V21 H4 Z" fill="#f2e000"/></svg>
<div class="t" style="left:10.6px;top:451.42px;font-size:12.5px;line-height:12.5px;font-weight:400;color:#8a8a8a;letter-spacing:0px;transform:scaleX(0.9965);transform-origin:0 0;">85:49</div>
<div class="t" style="left:79px;top:451.00px;font-size:13px;line-height:13px;font-weight:700;color:#fff;letter-spacing:0px;">Germany U19</div>
<div class="t" style="left:238px;top:451.00px;font-size:13px;line-height:13px;font-weight:700;color:#1592d2;letter-spacing:0px;">6</div>
<div class="t" style="left:79px;top:481.00px;font-size:13px;line-height:13px;font-weight:700;color:#fff;letter-spacing:0px;">Kazakhstan U19</div>
<div class="t" style="left:238px;top:481.00px;font-size:13px;line-height:13px;font-weight:700;color:#1592d2;letter-spacing:0px;">0</div>
<div class="t" style="left:79px;top:512.42px;font-size:12.5px;line-height:12.5px;font-weight:400;color:#8a8a8a;letter-spacing:0px;transform:scaleX(0.9729);transform-origin:0 0;">In-Play</div>
<div class="t" style="left:268px;top:451.42px;font-size:12.5px;line-height:12.5px;font-weight:400;color:#fff;letter-spacing:0px;">Germany U19/Kazakhstan U19<span style="color:#8c8c8c"> (6-0)</span></div>
<div class="r" style="left:480px;top:446px;width:65px;height:23px;background:#676767;border:1px solid #1f2e45;box-sizing:border-box;"></div>
<div class="t" style="left:362.5px;width:300px;text-align:center;top:451.97px;font-size:11.5px;line-height:11.5px;font-weight:700;color:#fff;letter-spacing:0px;">6.35 - 6.45</div>
<div class="t" style="left:268px;top:480.42px;font-size:12.5px;line-height:12.5px;font-weight:400;color:#fff;letter-spacing:0px;">Total Goals<span style="color:#8c8c8c"> (6)</span></div>
<div class="r" style="left:480px;top:475px;width:65px;height:23px;background:#676767;border:1px solid #1f2e45;box-sizing:border-box;"></div>
<div class="t" style="left:362.5px;width:300px;text-align:center;top:480.97px;font-size:11.5px;line-height:11.5px;font-weight:700;color:#fff;letter-spacing:0px;">6.45 - 6.55</div>
<div class="t" style="left:268px;top:509.42px;font-size:12.5px;line-height:12.5px;font-weight:400;color:#fff;letter-spacing:0px;">Bookings<span style="color:#8c8c8c"> (20)</span></div>
<div class="r" style="left:480px;top:504px;width:65px;height:23px;background:#676767;border:1px solid #1f2e45;box-sizing:border-box;"></div>
<div class="t" style="left:362.5px;width:300px;text-align:center;top:509.97px;font-size:11.5px;line-height:11.5px;font-weight:700;color:#fff;letter-spacing:0px;">23 - 26</div>
<div class="t" style="left:559px;top:451.42px;font-size:12.5px;line-height:12.5px;font-weight:400;color:#fff;letter-spacing:0px;">Shirt Numbers<span style="color:#8c8c8c"> (76)</span></div>
<div class="r" style="left:772px;top:446px;width:65px;height:23px;background:#676767;border:1px solid #1f2e45;box-sizing:border-box;"></div>
<div class="t" style="left:654.5px;width:300px;text-align:center;top:451.97px;font-size:11.5px;line-height:11.5px;font-weight:700;color:#fff;letter-spacing:0px;">82 - 84</div>
<div class="t" style="left:559px;top:480.42px;font-size:12.5px;line-height:12.5px;font-weight:400;color:#fff;letter-spacing:0px;">Corners<span style="color:#8c8c8c"> (6)</span></div>
<div class="r" style="left:772px;top:475px;width:65px;height:23px;background:#676767;border:1px solid #1f2e45;box-sizing:border-box;"></div>
<div class="t" style="left:654.5px;width:300px;text-align:center;top:480.97px;font-size:11.5px;line-height:11.5px;font-weight:700;color:#fff;letter-spacing:0px;">6.6 - 6.9</div>
<div class="t" style="left:559px;top:509.42px;font-size:12.5px;line-height:12.5px;font-weight:400;color:#fff;letter-spacing:0px;">Total Goal Minutes<span style="color:#8c8c8c"> (307)</span></div>
<div class="r" style="left:772px;top:504px;width:65px;height:23px;background:#676767;border:1px solid #1f2e45;box-sizing:border-box;"></div>
<div class="t" style="left:654.5px;width:300px;text-align:center;top:509.97px;font-size:11.5px;line-height:11.5px;font-weight:700;color:#fff;letter-spacing:0px;">349 - 357</div>
<div class="t" style="left:851px;top:451.42px;font-size:12.5px;line-height:12.5px;font-weight:400;color:#fff;letter-spacing:0px;">Germany U19</div>
<div class="t" style="left:851px;top:480.42px;font-size:12.5px;line-height:12.5px;font-weight:400;color:#fff;letter-spacing:0px;">Draw</div>
<div class="r" style="left:952px;top:475px;width:38px;height:23px;background:#676767;border:1px solid #1f2e45;box-sizing:border-box;"></div>
<div class="t" style="left:821.0px;width:300px;text-align:center;top:480.97px;font-size:11.5px;line-height:11.5px;font-weight:700;color:#fff;letter-spacing:0px;">1000/1</div>
<div class="t" style="left:851px;top:509.42px;font-size:12.5px;line-height:12.5px;font-weight:400;color:#fff;letter-spacing:0px;">Kazakhstan U19</div>
<div class="r" style="left:952px;top:504px;width:38px;height:23px;background:#676767;border:1px solid #1f2e45;box-sizing:border-box;"></div>
<div class="t" style="left:821.0px;width:300px;text-align:center;top:509.97px;font-size:11.5px;line-height:11.5px;font-weight:700;color:#fff;letter-spacing:0px;">1000/1</div>
<svg class="r" style="left:1000px;top:480px;width:8px;height:14px;" viewBox="0 0 8 14" preserveAspectRatio="none"><path d="M1.2 1 L6.8 7 L1.2 13" fill="none" stroke="#a4a8ac" stroke-width="1.8"/></svg>
<svg class="r" style="left:995px;top:506px;width:17px;height:17px;" viewBox="0 0 100 100" preserveAspectRatio="none"><path d="M50 0 L65 35 L100 36 L73 59 L81 99 L50 77 L19 99 L27 59 L0 36 L35 35 Z" fill="#d0d0d0"/></svg>
<div class="r" style="left:6px;top:537px;width:253px;height:90px;background:#0f203a;"></div>
<div class="r" style="left:263px;top:537px;width:287px;height:90px;background:#0f203a;"></div>
<div class="r" style="left:554px;top:537px;width:288px;height:90px;background:#0f203a;"></div>
<div class="r" style="left:846px;top:537px;width:172px;height:90px;background:#0f203a;"></div>
<svg class="r" style="left:52px;top:542px;width:18px;height:22px;" viewBox="0 0 18 22" preserveAspectRatio="none"><path d="M4,0 H14 L16,1 L17,2 L18,3 V6.3 L17,7.2 H14 V17 H15 V22 H10 V20 H8 V22 H3 V17 H4 V7.2 H1 L0,6.3 V3 L1,2 L2,1 Z" fill="#6c6f77"/><path d="M5,1 H13 L15,2 L17,3.4 V5.8 L15.5,6.3 H13 V15 H5 V6.3 H2.5 L1,5.8 V3.4 L3,2 Z" fill="#ff2222"/><path d="M7,2 V15 M9,1 V15 M11,2 V15" stroke="#c81818" stroke-width="0.6"/><rect x="5" y="15" width="8" height="2" fill="#c04040"/><path d="M4,17 H14 V21 H10.5 V19.2 H7.5 V21 H4 Z" fill="#f8f8f8"/></svg>
<svg class="r" style="left:52px;top:572px;width:18px;height:22px;" viewBox="0 0 18 22" preserveAspectRatio="none"><path d="M4,0 H14 L16,1 L17,2 L18,3 V6.3 L17,7.2 H14 V17 H15 V22 H10 V20 H8 V22 H3 V17 H4 V7.2 H1 L0,6.3 V3 L1,2 L2,1 Z" fill="#6c6f77"/><path d="M5,1 H13 L15,2 L17,3.4 V5.8 L15.5,6.3 H13 V15 H5 V6.3 H2.5 L1,5.8 V3.4 L3,2 Z" fill="#fbfbfb"/><rect x="5" y="15" width="8" height="2" fill="#aaa"/><path d="M4,17 H14 V21 H10.5 V19.2 H7.5 V21 H4 Z" fill="#111"/></svg>
<div class="t" style="left:10.6px;top:545.42px;font-size:12.5px;line-height:12.5px;font-weight:400;color:#8a8a8a;letter-spacing:0px;transform:scaleX(0.9965);transform-origin:0 0;">80:38</div>
<div class="t" style="left:79px;top:545.00px;font-size:13px;line-height:13px;font-weight:700;color:#fff;letter-spacing:0px;">Wales U19</div>
<div class="t" style="left:238px;top:545.00px;font-size:13px;line-height:13px;font-weight:700;color:#1592d2;letter-spacing:0px;">0</div>
<div class="t" style="left:79px;top:575.00px;font-size:13px;line-height:13px;font-weight:700;color:#fff;letter-spacing:0px;">Austria U19</div>
<div class="t" style="left:238px;top:575.00px;font-size:13px;line-height:13px;font-weight:700;color:#1592d2;letter-spacing:0px;">0</div>
<div class="t" style="left:79px;top:606.42px;font-size:12.5px;line-height:12.5px;font-weight:400;color:#8a8a8a;letter-spacing:0px;transform:scaleX(0.9729);transform-origin:0 0;">In-Play</div>
<div class="t" style="left:268px;top:545.42px;font-size:12.5px;line-height:12.5px;font-weight:400;color:#fff;letter-spacing:0px;">Austria U19/Wales U19<span style="color:#8c8c8c"> (0-0)</span></div>
<div class="r" style="left:480px;top:540px;width:65px;height:23px;background:#676767;border:1px solid #1f2e45;box-sizing:border-box;"></div>
<div class="t" style="left:362.5px;width:300px;text-align:center;top:545.97px;font-size:11.5px;line-height:11.5px;font-weight:700;color:#fff;letter-spacing:0px;">0.1 - 0.2</div>
<div class="t" style="left:268px;top:574.42px;font-size:12.5px;line-height:12.5px;font-weight:400;color:#fff;letter-spacing:0px;">Total Goals<span style="color:#8c8c8c"> (0)</span></div>
<div class="r" style="left:480px;top:569px;width:65px;height:23px;background:#676767;border:1px solid #1f2e45;box-sizing:border-box;"></div>
<div class="t" style="left:362.5px;width:300px;text-align:center;top:574.97px;font-size:11.5px;line-height:11.5px;font-weight:700;color:#fff;letter-spacing:0px;">0.5 - 0.6</div>
<div class="t" style="left:268px;top:603.42px;font-size:12.5px;line-height:12.5px;font-weight:400;color:#fff;letter-spacing:0px;">Bookings<span style="color:#8c8c8c"> (20)</span></div>
<div class="r" style="left:480px;top:598px;width:65px;height:23px;background:#676767;border:1px solid #1f2e45;box-sizing:border-box;"></div>
<div class="t" style="left:362.5px;width:300px;text-align:center;top:603.97px;font-size:11.5px;line-height:11.5px;font-weight:700;color:#fff;letter-spacing:0px;">32 - 35</div>
<div class="t" style="left:559px;top:545.42px;font-size:12.5px;line-height:12.5px;font-weight:400;color:#fff;letter-spacing:0px;">Shirt Numbers<span style="color:#8c8c8c"> (0)</span></div>
<div class="r" style="left:772px;top:540px;width:65px;height:23px;background:#676767;border:1px solid #1f2e45;box-sizing:border-box;"></div>
<div class="t" style="left:654.5px;width:300px;text-align:center;top:545.97px;font-size:11.5px;line-height:11.5px;font-weight:700;color:#fff;letter-spacing:0px;">6 - 8</div>
<div class="t" style="left:559px;top:574.42px;font-size:12.5px;line-height:12.5px;font-weight:400;color:#fff;letter-spacing:0px;">Corners<span style="color:#8c8c8c"> (8)</span></div>
<div class="r" style="left:772px;top:569px;width:65px;height:23px;background:#676767;border:1px solid #1f2e45;box-sizing:border-box;"></div>
<div class="t" style="left:654.5px;width:300px;text-align:center;top:574.97px;font-size:11.5px;line-height:11.5px;font-weight:700;color:#fff;letter-spacing:0px;">9.5 - 9.8</div>
<div class="t" style="left:559px;top:603.42px;font-size:12.5px;line-height:12.5px;font-weight:400;color:#fff;letter-spacing:0px;">Total Goal Minutes<span style="color:#8c8c8c"> (0)</span></div>
<div class="r" style="left:772px;top:598px;width:65px;height:23px;background:#676767;border:1px solid #1f2e45;box-sizing:border-box;"></div>
<div class="t" style="left:654.5px;width:300px;text-align:center;top:603.97px;font-size:11.5px;line-height:11.5px;font-weight:700;color:#fff;letter-spacing:0px;">44 - 52</div>
<div class="t" style="left:851px;top:545.42px;font-size:12.5px;line-height:12.5px;font-weight:400;color:#fff;letter-spacing:0px;">Wales U19</div>
<div class="r" style="left:952px;top:540px;width:38px;height:23px;background:#676767;border:1px solid #1f2e45;box-sizing:border-box;"></div>
<div class="t" style="left:821.0px;width:300px;text-align:center;top:545.97px;font-size:11.5px;line-height:11.5px;font-weight:700;color:#fff;letter-spacing:0px;">5/1</div>
<div class="t" style="left:851px;top:574.42px;font-size:12.5px;line-height:12.5px;font-weight:400;color:#fff;letter-spacing:0px;">Draw</div>
<div class="r" style="left:952px;top:569px;width:38px;height:23px;background:#676767;border:1px solid #1f2e45;box-sizing:border-box;"></div>
<div class="t" style="left:821.0px;width:300px;text-align:center;top:574.97px;font-size:11.5px;line-height:11.5px;font-weight:700;color:#fff;letter-spacing:0px;">6/11</div>
<div class="t" style="left:851px;top:603.42px;font-size:12.5px;line-height:12.5px;font-weight:400;color:#fff;letter-spacing:0px;">Austria U19</div>
<div class="r" style="left:952px;top:598px;width:38px;height:23px;background:#676767;border:1px solid #1f2e45;box-sizing:border-box;"></div>
<div class="t" style="left:821.0px;width:300px;text-align:center;top:603.97px;font-size:11.5px;line-height:11.5px;font-weight:700;color:#fff;letter-spacing:0px;">27/10</div>
<svg class="r" style="left:1000px;top:574px;width:8px;height:14px;" viewBox="0 0 8 14" preserveAspectRatio="none"><path d="M1.2 1 L6.8 7 L1.2 13" fill="none" stroke="#a4a8ac" stroke-width="1.8"/></svg>
<svg class="r" style="left:995px;top:600px;width:17px;height:17px;" viewBox="0 0 100 100" preserveAspectRatio="none"><path d="M50 0 L65 35 L100 36 L73 59 L81 99 L50 77 L19 99 L27 59 L0 36 L35 35 Z" fill="#d0d0d0"/></svg>
</div></body></html>
